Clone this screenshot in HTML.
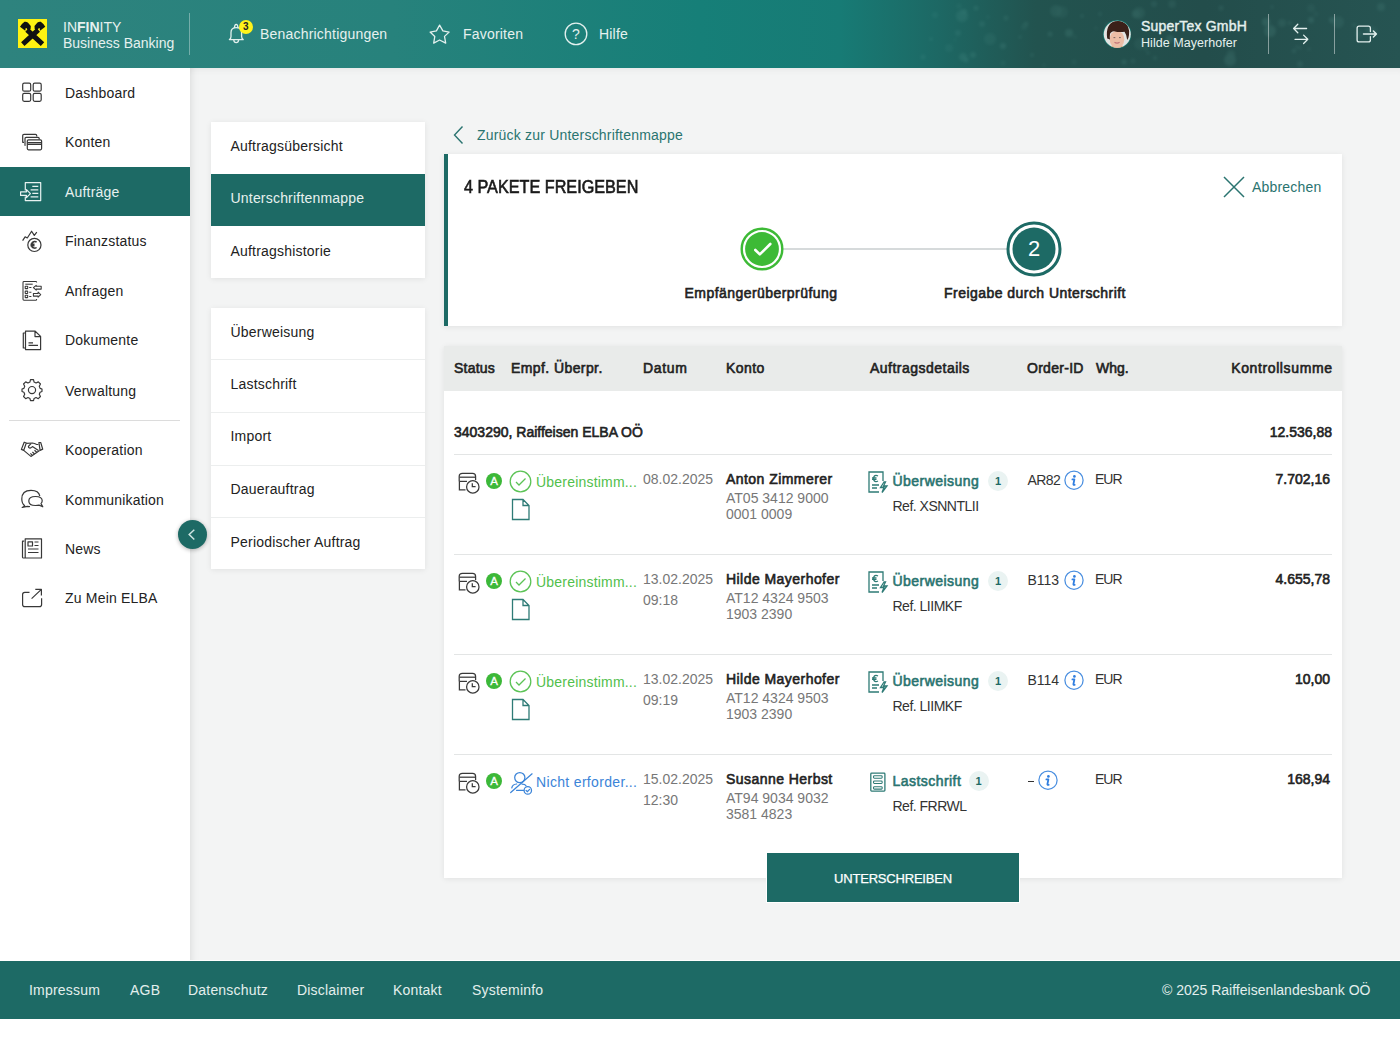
<!DOCTYPE html>
<html><head><meta charset="utf-8">
<style>
*{box-sizing:border-box;margin:0;padding:0}
html,body{width:1400px;height:1050px;overflow:hidden;background:#fff;font-family:"Liberation Sans",sans-serif;color:#222}
.abs{position:absolute}
#hdr{position:absolute;left:0;top:0;width:1400px;height:68px;background:linear-gradient(90deg,#2e837e 0%,#27827c 28%,#167f78 50%,#177b75 60%,#1d6864 67%,#22534f 74%,#234d4b 86%,#265452 100%);color:#e6f1ef}
#side{position:absolute;left:0;top:68px;width:190px;height:892px;background:#fff}
#main{position:absolute;left:190px;top:68px;width:1210px;height:892px;background:#f3f4f4;box-shadow:inset 10px 0 10px -10px rgba(0,0,0,.13), inset 0 8px 8px -8px rgba(0,0,0,.08)}
#foot{position:absolute;left:0;top:960.5px;width:1400px;height:58px;background:#1d6a65;color:#e3efed;font-size:14px}
.t14{font-size:14px;line-height:16px;white-space:nowrap}
.b{-webkit-text-stroke-width:0.6px;letter-spacing:0.45px}
.b0{letter-spacing:0}
.ls{letter-spacing:0.2px}
.nav{position:absolute;left:0;width:190px;height:49px;font-size:14px;color:#222}
.nav span{position:absolute;left:65px;top:16px}
.nav svg{position:absolute;left:20px;top:13px}
.nav.act{background:#1d6a65;color:#fff}
.card{position:absolute;background:#fff;box-shadow:0 1px 6px rgba(0,0,0,.08)}
.sub{position:absolute;left:0;width:214px;font-size:14px;color:#222}
.sub span{position:absolute;left:19px}
</style></head><body>
<div id="hdr">
  <svg class="abs" style="left:0;top:0" width="1400" height="68"><defs><filter id="bl" x="-50%" y="-50%" width="200%" height="200%"><feGaussianBlur stdDeviation="1.6"/></filter></defs><g fill="#7fc6bc" opacity="0.13" filter="url(#bl)"><circle cx="1062" cy="12" r="6" opacity="0.43"/><circle cx="1311" cy="8" r="4" opacity="0.43"/><circle cx="1154" cy="4" r="3" opacity="0.65"/><circle cx="1020" cy="37" r="1.5" opacity="0.90"/><circle cx="962" cy="16" r="6" opacity="0.75"/><circle cx="931" cy="39" r="1.5" opacity="0.99"/><circle cx="923" cy="57" r="2.5" opacity="0.65"/><circle cx="1170" cy="39" r="4" opacity="0.89"/><circle cx="990" cy="39" r="6" opacity="0.51"/><circle cx="949" cy="48" r="4" opacity="0.44"/><circle cx="1003" cy="46" r="3" opacity="0.87"/><circle cx="1133" cy="61" r="2.5" opacity="0.58"/><circle cx="1297" cy="47" r="2" opacity="0.45"/><circle cx="1050" cy="34" r="2.5" opacity="0.84"/><circle cx="1044" cy="65" r="1.5" opacity="0.71"/><circle cx="982" cy="24" r="3" opacity="0.65"/><circle cx="1381" cy="7" r="4" opacity="0.74"/><circle cx="1338" cy="22" r="6" opacity="0.61"/><circle cx="1148" cy="53" r="1.5" opacity="0.90"/><circle cx="1372" cy="32" r="6" opacity="0.44"/><circle cx="1266" cy="22" r="4" opacity="1.00"/><circle cx="1311" cy="20" r="3" opacity="0.93"/><circle cx="1074" cy="62" r="2.5" opacity="0.50"/><circle cx="959" cy="6" r="2.5" opacity="0.48"/><circle cx="1024" cy="27" r="3" opacity="0.45"/><circle cx="1125" cy="37" r="2" opacity="0.89"/><circle cx="1332" cy="20" r="3" opacity="0.99"/><circle cx="1241" cy="26" r="2" opacity="0.49"/><circle cx="988" cy="17" r="2" opacity="0.41"/><circle cx="1316" cy="14" r="2.5" opacity="0.40"/><circle cx="1109" cy="26" r="4" opacity="0.59"/><circle cx="963" cy="57" r="4" opacity="0.79"/><circle cx="1270" cy="31" r="6" opacity="0.88"/><circle cx="1096" cy="28" r="1.5" opacity="0.69"/><circle cx="1100" cy="14" r="2" opacity="0.66"/><circle cx="955" cy="40" r="1.5" opacity="0.40"/><circle cx="976" cy="8" r="2.5" opacity="0.77"/><circle cx="935" cy="15" r="3" opacity="0.49"/><circle cx="1026" cy="24" r="2.5" opacity="0.68"/><circle cx="958" cy="33" r="3" opacity="0.69"/><circle cx="1056" cy="11" r="6" opacity="0.61"/><circle cx="1032" cy="55" r="2" opacity="0.71"/><circle cx="1003" cy="63" r="2.5" opacity="0.49"/><circle cx="1172" cy="4" r="4" opacity="0.58"/><circle cx="1221" cy="8" r="2.5" opacity="0.71"/><circle cx="1354" cy="25" r="2" opacity="0.72"/><circle cx="1290" cy="23" r="2" opacity="0.77"/><circle cx="1294" cy="51" r="2" opacity="0.88"/><circle cx="1309" cy="49" r="2" opacity="0.52"/><circle cx="1146" cy="49" r="1.5" opacity="0.87"/><circle cx="1136" cy="14" r="4" opacity="0.97"/><circle cx="1124" cy="62" r="2.5" opacity="0.97"/><circle cx="1082" cy="16" r="2" opacity="0.68"/><circle cx="1069" cy="33" r="4" opacity="0.90"/><circle cx="1140" cy="44" r="6" opacity="0.45"/><circle cx="1230" cy="60" r="6" opacity="0.85"/><circle cx="1139" cy="13" r="6" opacity="0.60"/><circle cx="1300" cy="64" r="3" opacity="0.68"/><circle cx="1272" cy="7" r="2" opacity="0.50"/><circle cx="964" cy="12" r="3" opacity="0.88"/><circle cx="973" cy="55" r="3" opacity="0.79"/><circle cx="1075" cy="37" r="2" opacity="0.41"/><circle cx="1300" cy="48" r="1.5" opacity="0.72"/><circle cx="1367" cy="30" r="2" opacity="0.90"/><circle cx="1006" cy="18" r="2.5" opacity="0.70"/><circle cx="1282" cy="23" r="4" opacity="0.65"/><circle cx="966" cy="60" r="2.5" opacity="0.94"/><circle cx="1231" cy="54" r="4" opacity="0.65"/><circle cx="1359" cy="34" r="4" opacity="0.49"/><circle cx="1155" cy="58" r="2" opacity="0.77"/></g></svg>
  <!-- logo -->
  <svg class="abs" style="left:18.2px;top:19.2px" width="29.3" height="29.3" viewBox="0 0 29.3 29.3">
   <rect width="29.3" height="29.3" fill="#fff212"/>
   <path d="M4.8 25.2 L20.3 10.8 M24.5 25.2 L9 10.8" stroke="#111" stroke-width="5"/>
   <path d="M2 7.8 Q4 4.5 6.5 2.8 Q8.3 2.4 9.8 3.6 L12.8 7 L12.6 10 L10.4 11.8 L8.4 9 L7.6 9.3 L7.3 11.7 Z" fill="#111"/>
   <path d="M27.3 7.8 Q25.3 4.5 22.8 2.8 Q21 2.4 19.5 3.6 L16.5 7 L16.7 10 L18.9 11.8 L20.9 9 L21.7 9.3 L22 11.7 Z" fill="#111"/>
  </svg>
  <svg class="abs" style="left:0;top:0" width="1400" height="68" viewBox="0 0 1400 68" fill="none" stroke="#e3f0ee" stroke-width="1.3" stroke-linejoin="round" stroke-linecap="round">
   <!-- bell -->
   <path d="M229.4 39.6 Q231 38.5 231 36.5 V32.5 Q231 27.6 236.2 27.6 Q241.6 27.6 241.6 32.5 V36.5 Q241.6 38.5 243.2 39.6 Z"/>
   <path d="M234.5 27.6 Q234.6 24.4 236.2 24.4 Q237.8 24.4 237.9 27.6"/>
   <path d="M233.8 40 Q234 42.6 236.2 42.6 Q238.4 42.6 238.6 40"/>
   <!-- star -->
   <path d="M439.6 25.1 L442.9 30.9 L449.1 32.1 L444.5 36.4 L445.7 43.1 L439.6 40 L433.7 43.1 L434.8 36.4 L430.1 32.1 L436.4 30.9 Z"/>
   <!-- help -->
   <circle cx="576" cy="33.9" r="10.8"/>
   <!-- swap -->
   <path d="M1293.6 28.5 H1306.6 M1297.8 24.3 L1293.6 28.5 L1297.8 32.7"/>
   <path d="M1295 39.3 H1307.8 M1303.6 35.1 L1307.8 39.3 L1303.6 43.5"/>
   <!-- logout -->
   <path d="M1370.4 31.5 V28.2 Q1370.4 26.2 1368.4 26.2 H1359.1 Q1357.1 26.2 1357.1 28.2 V39.9 Q1357.1 41.9 1359.1 41.9 H1368.4 Q1370.4 41.9 1370.4 39.9 V36.6"/>
   <path d="M1363.5 34 H1376.3 M1373.4 31 L1376.4 34 L1373.4 37" stroke-width="1.5"/>
  </svg>
  <div class="abs" style="left:238.7px;top:19.6px;width:14.2px;height:14.2px;border-radius:50%;background:#fff31a;color:#222;font-size:10px;line-height:14.2px;text-align:center;font-weight:bold">3</div>
  <span class="abs" style="left:570px;top:25.5px;width:12px;text-align:center;font-size:14px;line-height:16px;color:#e3f0ee">?</span>
  <!-- avatar -->
  <svg class="abs" style="left:1102.5px;top:19.5px" width="28.5" height="28.5" viewBox="0 0 28.5 28.5">
   <defs><clipPath id="av"><circle cx="14.25" cy="14.25" r="13.5"/></clipPath></defs>
   <circle cx="14.25" cy="14.25" r="14.2" fill="#1a7a72"/>
   <g clip-path="url(#av)">
    <rect width="28.5" height="28.5" fill="#e2e4e2"/>
    <ellipse cx="14.5" cy="31" rx="11" ry="6" fill="#e0a884"/>
    <ellipse cx="14" cy="19.3" rx="7.3" ry="8.6" fill="#ecbda6"/>
    <path d="M4.2 18.5 Q2.2 4 12 1.3 Q17 0.4 21 2.4 Q27.2 6 26 15 Q25.6 18.5 24.2 20 Q23.6 14.5 21.5 11.8 Q16 12.6 11 11.2 Q7.6 11.6 7 14 Q6.6 16.5 7 19.5 Z" fill="#3b2119"/>
    <path d="M10.5 17.6 H12.3 M16 17.6 H17.8" stroke="#6a5a58" stroke-width="0.9"/>
    <path d="M11.5 22.3 Q14 23.9 16.6 22.3" stroke="#c4757a" stroke-width="1.2" fill="none"/>
   </g>
  </svg>
  <div class="abs" style="left:63px;top:18.8px;font-size:14px;line-height:16px">IN<b>FIN</b>ITY<br>Business Banking</div>
  <div class="abs" style="left:189px;top:13px;width:1px;height:42px;background:rgba(255,255,255,.35)"></div>
  <div class="abs" style="left:260px;top:26px;font-size:14px;letter-spacing:0.2px">Benachrichtigungen</div>
  <div class="abs" style="left:463px;top:26px;font-size:14px;letter-spacing:0.2px">Favoriten</div>
  <div class="abs" style="left:599px;top:26px;font-size:14px;letter-spacing:0.2px">Hilfe</div>
  <div class="abs" style="left:1141px;top:18px;font-size:14px;-webkit-text-stroke-width:0.4px;letter-spacing:0.19px">SuperTex GmbH</div>
  <div class="abs" style="left:1141px;top:35.7px;font-size:12.5px;letter-spacing:0.05px">Hilde Mayerhofer</div>
  <div class="abs" style="left:1268px;top:14px;width:1px;height:40px;background:rgba(255,255,255,.45)"></div>
  <div class="abs" style="left:1334px;top:14px;width:1px;height:40px;background:rgba(255,255,255,.45)"></div>
</div>
<div id="main"></div>
<!-- sub nav -->
<div class="card" style="left:211px;top:122px;width:214px;height:156px">
  <span class="abs t14 ls" style="left:19.5px;top:16.15px">Auftragsübersicht</span>
  <div class="abs" style="left:0;top:52px;width:214px;height:52px;background:#1d6a65"></div>
  <span class="abs t14 ls" style="left:19.5px;top:68.15px;color:#e8f1ef">Unterschriftenmappe</span>
  <span class="abs t14 ls" style="left:19.5px;top:120.75px">Auftragshistorie</span>
</div>
<div class="card" style="left:211px;top:307.5px;width:214px;height:261.5px">
  <span class="abs t14 ls" style="left:19.5px;top:16.45px">Überweisung</span>
  <div class="abs" style="left:0;top:51.7px;width:214px;height:1px;background:#eceeee"></div>
  <span class="abs t14 ls" style="left:19.5px;top:68.95px">Lastschrift</span>
  <div class="abs" style="left:0;top:104.5px;width:214px;height:1px;background:#eceeee"></div>
  <span class="abs t14 ls" style="left:19.5px;top:120.95px">Import</span>
  <div class="abs" style="left:0;top:157px;width:214px;height:1px;background:#eceeee"></div>
  <span class="abs t14 ls" style="left:19.5px;top:173.75px">Dauerauftrag</span>
  <div class="abs" style="left:0;top:209.8px;width:214px;height:1px;background:#eceeee"></div>
  <span class="abs t14 ls" style="left:19.5px;top:226.35px">Periodischer Auftrag</span>
</div>
<!-- back link -->
<svg class="abs" style="left:450px;top:124px" width="16" height="22" viewBox="0 0 16 22"><path d="M12.5 2.5 L4.5 11 L12.5 19.5" fill="none" stroke="#2a7470" stroke-width="1.4"/></svg>
<span class="abs t14 ls" style="left:477px;top:127.4px;color:#2a7470">Zurück zur Unterschriftenmappe</span>
<!-- step card -->
<div class="card" style="left:444px;top:154px;width:898px;height:172px;border-left:4px solid #1d6a65">
  <span class="abs" style="left:16px;top:22.5px;font-size:18px;line-height:21px;white-space:nowrap;-webkit-text-stroke:0.6px #1a1a1a;color:#1a1a1a;transform:scaleX(0.9);transform-origin:0 0">4 PAKETE FREIGEBEN</span>
  <svg class="abs" style="left:775px;top:22px" width="22" height="22" viewBox="0 0 22 22"><path d="M1 1 L21 21 M21 1 L1 21" stroke="#2a7470" stroke-width="1.5"/></svg>
  <span class="abs t14 ls" style="left:804px;top:24.9px;color:#2a7470">Abbrechen</span>
  <div class="abs" style="left:335px;top:94px;width:224px;height:2px;background:#d6dadb"></div>
  <svg class="abs" style="left:290.5px;top:72px" width="46" height="46" viewBox="0 0 46 46"><circle cx="23" cy="23" r="20.3" fill="none" stroke="#3dba36" stroke-width="2.4"/><circle cx="23" cy="23" r="16.9" fill="#3dba36"/><path d="M16.3 24 L20.8 28.4 L31.3 18" fill="none" stroke="#fff" stroke-width="2.6" stroke-linecap="round" stroke-linejoin="round"/></svg>
  <svg class="abs" style="left:557px;top:66px" width="58" height="58" viewBox="0 0 58 58"><circle cx="29" cy="29" r="26" fill="none" stroke="#1d6a65" stroke-width="3"/><circle cx="29" cy="29" r="21.5" fill="#1d6a65"/></svg>
  <span class="abs" style="left:557px;top:82px;width:58px;text-align:center;font-size:22px;line-height:26px;color:#fff">2</span>
  <span class="abs t14 b" style="left:213px;top:131px;width:200px;text-align:center;color:#222">Empfängerüberprüfung</span>
  <span class="abs t14 b" style="left:487px;top:131px;width:200px;text-align:center;color:#222">Freigabe durch Unterschrift</span>
</div>
<!-- table card -->
<div class="card" style="left:444px;top:345.5px;width:898px;height:532.5px">
  <div class="abs" style="left:0;top:0;width:898px;height:45px;background:#e9ebea"></div>
  <span class="abs t14 b" style="left:10px;top:14.5px;letter-spacing:0.22px">Status</span>
  <span class="abs t14 b" style="left:67px;top:14.5px;letter-spacing:0.41px">Empf. Überpr.</span>
  <span class="abs t14 b" style="left:199px;top:14.5px;letter-spacing:0.64px">Datum</span>
  <span class="abs t14 b" style="left:282px;top:14.5px;letter-spacing:0.44px">Konto</span>
  <span class="abs t14 b" style="left:426px;top:14.5px;letter-spacing:0.48px">Auftragsdetails</span>
  <span class="abs t14 b" style="left:583px;top:14.5px;letter-spacing:0.28px">Order-ID</span>
  <span class="abs t14 b" style="left:652px;top:14.5px;letter-spacing:0px">Whg.</span>
  <span class="abs t14 b" style="right:9.4px;top:14.5px;letter-spacing:0.62px">Kontrollsumme</span>
  <span class="abs t14 b b0" style="left:10px;top:78.6px">3403290, Raiffeisen ELBA OÖ</span>
  <span class="abs t14 b b0" style="right:10px;top:78.6px">12.536,88</span>
<div class="abs" style="left:10px;top:108.0px;width:878px;height:1px;background:#e3e5e5"></div>
<svg class="abs" style="left:14px;top:125.0px" width="24" height="24" viewBox="0 0 24 24" fill="none" stroke="#3a3a3a" stroke-width="1.25"><path d="M1.2 10.4 V5.5 Q1.2 2.4 4.5 2.4 H14.5 Q17.6 2.4 17.6 5.5 V9"/><path d="M1.5 6.2 H17.3"/><path d="M1.2 10.4 H9"/><path d="M1.4 10.4 V18.8 H7.5"/><circle cx="14.8" cy="15.9" r="6.2" fill="#fff"/><path d="M14.3 12.3 V15.5 H17.6"/></svg>
<div class="abs" style="left:42px;top:127.0px;width:16px;height:16px;border-radius:50%;background:#3cb838;color:#fff;font-size:11.5px;line-height:16px;text-align:center;-webkit-text-stroke:0.3px #fff">A</div>
<svg class="abs" style="left:64.5px;top:124.5px" width="23" height="23" viewBox="0 0 23 23" fill="none" stroke="#5cc356" stroke-width="1.3"><circle cx="11.5" cy="11.5" r="10.3"/><path d="M7 12 L10 15 L16.5 8.5"/></svg>
<span class="abs t14" style="left:92px;top:128.55px;color:#52c04c;letter-spacing:0.2px">Übereinstimm...</span>
<svg class="abs" style="left:67px;top:152.0px" width="20" height="23" viewBox="0 0 20 23" fill="none" stroke="#2e7b76" stroke-width="1.3"><path d="M1.5 1.5 H12 L18 7.5 V21.5 H1.5 Z M12 1.5 V7.5 H18"/></svg>
<span class="abs t14" style="left:199px;top:125.45px;color:#777">08.02.2025</span>
<span class="abs t14 b" style="left:282px;top:125.25px;color:#222">Anton Zimmerer</span>
<span class="abs t14" style="left:282px;top:144.65px;color:#777">AT05 3412 9000</span>
<span class="abs t14" style="left:282px;top:160.95px;color:#777">0001 0009</span>
<svg class="abs" style="left:423px;top:124.0px" width="22" height="24" viewBox="0 0 22 24" fill="none" stroke="#2e7b76" stroke-width="1.3"><path d="M16 11 V2 H2 V22 H12"/><path d="M11 6 Q8.5 4.5 7 6.5 Q5.8 8.5 7 10.5 Q8.5 12.5 11 11 M5 7.8 H9.5 M5 9.3 H9.5"/><path d="M5 15 H12 M5 18 H10"/><path d="M17 12 L13.5 17.5 H17 L15 22.5 L20 16 H16.5 L18.5 12 Z"/></svg>
<span class="abs t14 b" style="left:448.5px;top:127.65px;color:#2a7470">Überweisung</span>
<div class="abs" style="left:544px;top:125.5px;width:20px;height:20px;border-radius:50%;background:#eaf3f2;color:#1d6a65;font-size:11px;line-height:20px;text-align:center;font-weight:bold">1</div>
<span class="abs t14" style="left:448.5px;top:152.65px;color:#333;letter-spacing:-0.5px">Ref. XSNNTLII</span>
<span class="abs t14" style="left:583.5px;top:126.05px;color:#333;letter-spacing:-0.6px">AR82</span>
<svg class="abs" style="left:620px;top:124.5px" width="20" height="20" viewBox="0 0 20 20"><circle cx="10" cy="10.2" r="9.1" fill="none" stroke="#4a8fe0" stroke-width="1.25"/><circle cx="10.4" cy="6.4" r="1.35" fill="#2f7ee0"/><path d="M8.4 9.4 H10.4 L9.4 14.2 Q9.3 15.2 10.7 14.8" fill="none" stroke="#2f7ee0" stroke-width="1.8" stroke-linejoin="round" stroke-linecap="round"/></svg>
<span class="abs t14" style="left:651px;top:125.85px;color:#333;letter-spacing:-1px">EUR</span>
<span class="abs t14 b b0" style="right:12px;top:125.85px;color:#222">7.702,16</span>
<div class="abs" style="left:10px;top:208.0px;width:878px;height:1px;background:#e3e5e5"></div>
<svg class="abs" style="left:14px;top:225.0px" width="24" height="24" viewBox="0 0 24 24" fill="none" stroke="#3a3a3a" stroke-width="1.25"><path d="M1.2 10.4 V5.5 Q1.2 2.4 4.5 2.4 H14.5 Q17.6 2.4 17.6 5.5 V9"/><path d="M1.5 6.2 H17.3"/><path d="M1.2 10.4 H9"/><path d="M1.4 10.4 V18.8 H7.5"/><circle cx="14.8" cy="15.9" r="6.2" fill="#fff"/><path d="M14.3 12.3 V15.5 H17.6"/></svg>
<div class="abs" style="left:42px;top:227.0px;width:16px;height:16px;border-radius:50%;background:#3cb838;color:#fff;font-size:11.5px;line-height:16px;text-align:center;-webkit-text-stroke:0.3px #fff">A</div>
<svg class="abs" style="left:64.5px;top:224.5px" width="23" height="23" viewBox="0 0 23 23" fill="none" stroke="#5cc356" stroke-width="1.3"><circle cx="11.5" cy="11.5" r="10.3"/><path d="M7 12 L10 15 L16.5 8.5"/></svg>
<span class="abs t14" style="left:92px;top:228.55px;color:#52c04c;letter-spacing:0.2px">Übereinstimm...</span>
<svg class="abs" style="left:67px;top:252.0px" width="20" height="23" viewBox="0 0 20 23" fill="none" stroke="#2e7b76" stroke-width="1.3"><path d="M1.5 1.5 H12 L18 7.5 V21.5 H1.5 Z M12 1.5 V7.5 H18"/></svg>
<span class="abs t14" style="left:199px;top:225.45px;color:#777">13.02.2025</span>
<span class="abs t14" style="left:199px;top:246.05px;color:#777">09:18</span>
<span class="abs t14 b" style="left:282px;top:225.25px;color:#222">Hilde Mayerhofer</span>
<span class="abs t14" style="left:282px;top:244.65px;color:#777">AT12 4324 9503</span>
<span class="abs t14" style="left:282px;top:260.95px;color:#777">1903 2390</span>
<svg class="abs" style="left:423px;top:224.0px" width="22" height="24" viewBox="0 0 22 24" fill="none" stroke="#2e7b76" stroke-width="1.3"><path d="M16 11 V2 H2 V22 H12"/><path d="M11 6 Q8.5 4.5 7 6.5 Q5.8 8.5 7 10.5 Q8.5 12.5 11 11 M5 7.8 H9.5 M5 9.3 H9.5"/><path d="M5 15 H12 M5 18 H10"/><path d="M17 12 L13.5 17.5 H17 L15 22.5 L20 16 H16.5 L18.5 12 Z"/></svg>
<span class="abs t14 b" style="left:448.5px;top:227.65px;color:#2a7470">Überweisung</span>
<div class="abs" style="left:544px;top:225.5px;width:20px;height:20px;border-radius:50%;background:#eaf3f2;color:#1d6a65;font-size:11px;line-height:20px;text-align:center;font-weight:bold">1</div>
<span class="abs t14" style="left:448.5px;top:252.65px;color:#333;letter-spacing:-0.5px">Ref. LIIMKF</span>
<span class="abs t14" style="left:583.5px;top:226.05px;color:#333;">B113</span>
<svg class="abs" style="left:620px;top:224.5px" width="20" height="20" viewBox="0 0 20 20"><circle cx="10" cy="10.2" r="9.1" fill="none" stroke="#4a8fe0" stroke-width="1.25"/><circle cx="10.4" cy="6.4" r="1.35" fill="#2f7ee0"/><path d="M8.4 9.4 H10.4 L9.4 14.2 Q9.3 15.2 10.7 14.8" fill="none" stroke="#2f7ee0" stroke-width="1.8" stroke-linejoin="round" stroke-linecap="round"/></svg>
<span class="abs t14" style="left:651px;top:225.85px;color:#333;letter-spacing:-1px">EUR</span>
<span class="abs t14 b b0" style="right:12px;top:225.85px;color:#222">4.655,78</span>
<div class="abs" style="left:10px;top:308.0px;width:878px;height:1px;background:#e3e5e5"></div>
<svg class="abs" style="left:14px;top:325.0px" width="24" height="24" viewBox="0 0 24 24" fill="none" stroke="#3a3a3a" stroke-width="1.25"><path d="M1.2 10.4 V5.5 Q1.2 2.4 4.5 2.4 H14.5 Q17.6 2.4 17.6 5.5 V9"/><path d="M1.5 6.2 H17.3"/><path d="M1.2 10.4 H9"/><path d="M1.4 10.4 V18.8 H7.5"/><circle cx="14.8" cy="15.9" r="6.2" fill="#fff"/><path d="M14.3 12.3 V15.5 H17.6"/></svg>
<div class="abs" style="left:42px;top:327.0px;width:16px;height:16px;border-radius:50%;background:#3cb838;color:#fff;font-size:11.5px;line-height:16px;text-align:center;-webkit-text-stroke:0.3px #fff">A</div>
<svg class="abs" style="left:64.5px;top:324.5px" width="23" height="23" viewBox="0 0 23 23" fill="none" stroke="#5cc356" stroke-width="1.3"><circle cx="11.5" cy="11.5" r="10.3"/><path d="M7 12 L10 15 L16.5 8.5"/></svg>
<span class="abs t14" style="left:92px;top:328.55px;color:#52c04c;letter-spacing:0.2px">Übereinstimm...</span>
<svg class="abs" style="left:67px;top:352.0px" width="20" height="23" viewBox="0 0 20 23" fill="none" stroke="#2e7b76" stroke-width="1.3"><path d="M1.5 1.5 H12 L18 7.5 V21.5 H1.5 Z M12 1.5 V7.5 H18"/></svg>
<span class="abs t14" style="left:199px;top:325.45px;color:#777">13.02.2025</span>
<span class="abs t14" style="left:199px;top:346.05px;color:#777">09:19</span>
<span class="abs t14 b" style="left:282px;top:325.25px;color:#222">Hilde Mayerhofer</span>
<span class="abs t14" style="left:282px;top:344.65px;color:#777">AT12 4324 9503</span>
<span class="abs t14" style="left:282px;top:360.95px;color:#777">1903 2390</span>
<svg class="abs" style="left:423px;top:324.0px" width="22" height="24" viewBox="0 0 22 24" fill="none" stroke="#2e7b76" stroke-width="1.3"><path d="M16 11 V2 H2 V22 H12"/><path d="M11 6 Q8.5 4.5 7 6.5 Q5.8 8.5 7 10.5 Q8.5 12.5 11 11 M5 7.8 H9.5 M5 9.3 H9.5"/><path d="M5 15 H12 M5 18 H10"/><path d="M17 12 L13.5 17.5 H17 L15 22.5 L20 16 H16.5 L18.5 12 Z"/></svg>
<span class="abs t14 b" style="left:448.5px;top:327.65px;color:#2a7470">Überweisung</span>
<div class="abs" style="left:544px;top:325.5px;width:20px;height:20px;border-radius:50%;background:#eaf3f2;color:#1d6a65;font-size:11px;line-height:20px;text-align:center;font-weight:bold">1</div>
<span class="abs t14" style="left:448.5px;top:352.65px;color:#333;letter-spacing:-0.5px">Ref. LIIMKF</span>
<span class="abs t14" style="left:583.5px;top:326.05px;color:#333;">B114</span>
<svg class="abs" style="left:620px;top:324.5px" width="20" height="20" viewBox="0 0 20 20"><circle cx="10" cy="10.2" r="9.1" fill="none" stroke="#4a8fe0" stroke-width="1.25"/><circle cx="10.4" cy="6.4" r="1.35" fill="#2f7ee0"/><path d="M8.4 9.4 H10.4 L9.4 14.2 Q9.3 15.2 10.7 14.8" fill="none" stroke="#2f7ee0" stroke-width="1.8" stroke-linejoin="round" stroke-linecap="round"/></svg>
<span class="abs t14" style="left:651px;top:325.85px;color:#333;letter-spacing:-1px">EUR</span>
<span class="abs t14 b b0" style="right:12px;top:325.85px;color:#222">10,00</span>
<div class="abs" style="left:10px;top:408.0px;width:878px;height:1px;background:#e3e5e5"></div>
<svg class="abs" style="left:14px;top:425.0px" width="24" height="24" viewBox="0 0 24 24" fill="none" stroke="#3a3a3a" stroke-width="1.25"><path d="M1.2 10.4 V5.5 Q1.2 2.4 4.5 2.4 H14.5 Q17.6 2.4 17.6 5.5 V9"/><path d="M1.5 6.2 H17.3"/><path d="M1.2 10.4 H9"/><path d="M1.4 10.4 V18.8 H7.5"/><circle cx="14.8" cy="15.9" r="6.2" fill="#fff"/><path d="M14.3 12.3 V15.5 H17.6"/></svg>
<div class="abs" style="left:42px;top:427.0px;width:16px;height:16px;border-radius:50%;background:#3cb838;color:#fff;font-size:11.5px;line-height:16px;text-align:center;-webkit-text-stroke:0.3px #fff">A</div>
<svg class="abs" style="left:64.5px;top:423.5px" width="26" height="27" viewBox="0 0 26 27" fill="none" stroke="#3b84d8" stroke-width="1.25" stroke-linecap="round"><circle cx="10.8" cy="8.6" r="5.1"/><path d="M2.8 18.8 Q3.5 15.3 7.6 15 M13 15 Q16.2 15 17 16.8"/><path d="M7.6 21.4 H14.5"/><path d="M1.7 23.5 L23.1 4.8"/><circle cx="18.8" cy="21.4" r="3.7"/><path d="M17.1 21.5 L18.4 22.7 L20.6 20.3"/></svg>
<span class="abs t14" style="left:92px;top:428.55px;color:#3b84d8;letter-spacing:0.33px">Nicht erforder...</span>
<span class="abs t14" style="left:199px;top:425.45px;color:#777">15.02.2025</span>
<span class="abs t14" style="left:199px;top:446.05px;color:#777">12:30</span>
<span class="abs t14 b" style="left:282px;top:425.25px;color:#222">Susanne Herbst</span>
<span class="abs t14" style="left:282px;top:444.65px;color:#777">AT94 9034 9032</span>
<span class="abs t14" style="left:282px;top:460.95px;color:#777">3581 4823</span>
<svg class="abs" style="left:423px;top:424.5px" width="22" height="24" viewBox="0 0 22 24" fill="none" stroke="#2e7b76" stroke-width="1.3"><rect x="3.8" y="3.1" width="14.1" height="18" rx="0.8"/><g stroke-width="1.05"><rect x="6.5" y="5.8" width="8.7" height="2.4" rx="0.9"/><rect x="6.5" y="11" width="8.7" height="2.4" rx="0.9"/><rect x="6.5" y="16.7" width="8.7" height="2.4" rx="0.9"/></g></svg>
<span class="abs t14 b" style="left:448.5px;top:427.65px;color:#2a7470">Lastschrift</span>
<div class="abs" style="left:524.5px;top:425.5px;width:20px;height:20px;border-radius:50%;background:#eaf3f2;color:#1d6a65;font-size:11px;line-height:20px;text-align:center;font-weight:bold">1</div>
<span class="abs t14" style="left:448.5px;top:452.65px;color:#333;letter-spacing:-0.5px">Ref. FRRWL</span>
<div class="abs" style="left:584px;top:435.2px;width:5.5px;height:1.5px;background:#333"></div>
<svg class="abs" style="left:594px;top:424.5px" width="20" height="20" viewBox="0 0 20 20"><circle cx="10" cy="10.2" r="9.1" fill="none" stroke="#4a8fe0" stroke-width="1.25"/><circle cx="10.4" cy="6.4" r="1.35" fill="#2f7ee0"/><path d="M8.4 9.4 H10.4 L9.4 14.2 Q9.3 15.2 10.7 14.8" fill="none" stroke="#2f7ee0" stroke-width="1.8" stroke-linejoin="round" stroke-linecap="round"/></svg>
<span class="abs t14" style="left:651px;top:425.85px;color:#333;letter-spacing:-1px">EUR</span>
<span class="abs t14 b b0" style="right:12px;top:425.85px;color:#222">168,94</span>
</div>
<div class="abs" style="left:766px;top:852px;width:254px;height:51px;background:#1d6a65;border:1px solid #fff"></div>
<span class="abs" style="left:766px;top:870.5px;width:254px;text-align:center;font-size:13px;line-height:16px;color:#fff;letter-spacing:-0.2px;-webkit-text-stroke:0.25px #fff">UNTERSCHREIBEN</span>

<div id="side">
  <div class="abs" style="left:0;top:99px;width:190px;height:49px;background:#1d6a65"></div>
  <span class="abs t14 ls" style="left:65px;top:16.65px;color:#222">Dashboard</span>
  <span class="abs t14 ls" style="left:65px;top:66.15px;color:#222">Konten</span>
  <span class="abs t14 ls" style="left:65px;top:115.65px;color:#e8f1ef">Aufträge</span>
  <span class="abs t14 ls" style="left:65px;top:165.15px;color:#222">Finanzstatus</span>
  <span class="abs t14 ls" style="left:65px;top:214.75px;color:#222">Anfragen</span>
  <span class="abs t14 ls" style="left:65px;top:264.45px;color:#222">Dokumente</span>
  <span class="abs t14 ls" style="left:65px;top:314.65px;color:#222">Verwaltung</span>
  <span class="abs t14 ls" style="left:65px;top:374.15px;color:#222">Kooperation</span>
  <span class="abs t14 ls" style="left:65px;top:423.65px;color:#222">Kommunikation</span>
  <span class="abs t14 ls" style="left:65px;top:472.65px;color:#222">News</span>
  <span class="abs t14 ls" style="left:65px;top:522.15px;color:#222">Zu Mein ELBA</span>
  <div class="abs" style="left:9px;top:351.5px;width:171px;height:1px;background:#dcdcdc"></div>
</div>

<!-- sidebar icons -->
<svg class="abs" style="left:0;top:0" width="190" height="960" viewBox="0 0 190 960" fill="none" stroke="#383838" stroke-width="1.2" stroke-linejoin="round">
  <!-- dashboard -->
  <rect x="22.7" y="83.2" width="8" height="8" rx="1.5"/><rect x="33.2" y="83.2" width="8" height="8" rx="1.5"/>
  <rect x="22.7" y="93.3" width="8" height="8" rx="1.5"/><rect x="33.2" y="93.3" width="8" height="8" rx="1.5"/>
  <!-- konten -->
  <path d="M24 142.3 H22.7 V135.5 Q22.7 134.3 24 134.3 H35.5 Q36.7 134.3 36.7 135.5 V136.5"/>
  <path d="M25.5 145.3 H25 V138.5 Q25 137.3 26.2 137.3 H38 Q39.2 137.3 39.2 138.5 V139.5"/>
  <rect x="27.3" y="139.8" width="14.3" height="10" rx="1.2"/>
  <path d="M27.3 142.6 H41.6 M27.3 144.4 H41.6"/>
  <!-- aufträge (white) -->
  <g stroke="#e8f2f1">
   <path d="M25.3 190.5 V182.6 H40.7 V200.6 H25.3 V196.5"/>
   <path d="M20.6 191.8 H26.5 V189.6 L30.4 193.6 L26.5 197.6 V195.4 H20.6 Z"/>
   <path d="M32.3 186.3 H38.3 M30.6 189.9 H38.3 M32.3 193.3 H38.3 M30.6 196.9 H38.3"/>
  </g>
  <!-- finanzstatus -->
  <path d="M22.6 240.6 L25.1 236.8 L27.3 238 L31.6 231.2 L34.3 235.4 L36.8 232.2"/>
  <circle cx="34.4" cy="244.9" r="6.6"/>
  <path d="M36.6 242.2 Q35.6 241.4 34.4 241.6 Q31.6 242.2 31.6 244.9 Q31.6 247.8 34.4 248.1 Q35.6 248.3 36.6 247.5 M30.5 244.2 H34.5 M30.5 245.8 H34.5" stroke-width="1.5"/>
  <!-- anfragen -->
  <g stroke-width="1.05">
  <path d="M36.6 282.6 V282.3 Q36.6 281.5 35.8 281.5 H23.9 Q23 281.5 23 282.4 V299.3 Q23 300.2 23.9 300.2 H35.8 Q36.6 300.2 36.6 299.4 V299.1"/>
  <path d="M25.3 284.2 H32.7"/>
  <rect x="25.2" y="286.2" width="2.5" height="2.4" rx="0.4"/><rect x="25.2" y="291.1" width="2.5" height="2.4" rx="0.4"/><rect x="25.2" y="295.2" width="2.5" height="2.4" rx="0.4"/>
  <path d="M29.2 287.5 H31.4 M29.2 292.3 H31.4 M29.2 296.5 H31.4"/>
  <path d="M41.2 286.3 H36.2 V285.3 L33.4 287.7 L36.2 290.2 V289.1 H41.2 Z"/>
  <path d="M33.4 293.4 H38.1 V292 L40.7 294.6 L38.1 297.2 V296.1 H33.4 Z"/>
  </g>
  <!-- dokumente -->
  <path d="M25 333 H23.3 V348 H25"/>
  <path d="M25.5 331.2 H35.2 L40.6 336.4 V349.6 H25.5 Z M35 331.5 V336.6 H40.4"/>
  <path d="M28.5 342.8 H33 M28.5 345.3 H38"/>
  <!-- verwaltung gear -->
  <path d="M30.2 380 H33.6 L34.2 382.7 L36.4 383.8 L38.9 382.5 L41.3 384.9 L40 387.4 L40.9 389.7 L43 390.5 V393.2 L40.9 394 L40 396.3 L41.3 398.8 L38.9 401.2 L36.4 399.9 L34.2 401 L33.6 403.3 H30.2 L29.6 401 L27.4 399.9 L24.9 401.2 L22.5 398.8 L23.8 396.3 L22.9 394 L20.8 393.2 V390.5 L22.9 389.7 L23.8 387.4 L22.5 384.9 L24.9 382.5 L27.4 383.8 L29.6 382.7 Z" transform="translate(32 390.1) scale(0.9) translate(-31.9 -391.65)" stroke-width="1.3"/>
  <circle cx="32" cy="390.1" r="3.6"/>
  <!-- kooperation -->
  <path d="M21.4 449.4 L24.2 442.2 L26.3 443 L23.7 450.4 Z"/>
  <path d="M38.9 442.5 L40.7 442.5 L42.7 449.1 L40.1 450.4 Z"/>
  <path d="M26.4 443.3 Q29.5 443 32.4 443 Q34.5 443.4 36.3 444.3 L38.4 444.5"/>
  <path d="M31 443.6 L28.4 446.4 Q28.6 448.5 30.8 447.9 L32.4 446.6 L38.5 450.6"/>
  <path d="M23.7 450.4 L30.9 456.4 L39.6 450.4"/>
  <path d="M30.4 453.3 L32.4 455.3 M32.4 452 L34.6 454 M34.5 450.2 L36.7 452.2"/>
  <!-- kommunikation -->
  <path d="M25 505.8 Q21.8 503.8 21.8 498.9 Q21.8 490.3 31 490.3 Q38.8 490.3 39.8 496.2"/>
  <path d="M25 505.8 L22.2 507.4 L27.5 506.4 Q28.8 506.6 30 506.5"/>
  <path d="M35.5 496.5 Q42.2 496.5 42.2 500.8 Q42.2 502.5 41 503.6 L42.8 506.8 L39 505.1 Q37.5 505.5 35.5 505.5 Q28.8 505.5 28.8 500.9 Q28.8 496.5 35.5 496.5 Z"/>
  <!-- news -->
  <path d="M24.2 541.2 H22.5 V557.2 Q22.5 558 23.6 558 H41.5 V538.8 H25.2 V557.5"/>
  <rect x="28" y="541.8" width="4.5" height="4.2"/>
  <path d="M34.5 542 H38.5 M34.5 545.5 H38.5 M28 549 H38.5 M28 552.5 H38.5"/>
  <!-- zu mein elba -->
  <path d="M29.5 592.3 H24.8 Q22.6 592.3 22.6 594.5 V604.4 Q22.6 606.6 24.8 606.6 H39.4 Q41.6 606.6 41.6 604.4 V598.3"/>
  <path d="M31.6 598.6 L41.4 589.4 M35.3 589.4 H41.4 V595.5"/>
</svg>
<!-- collapse button -->
<div class="abs" style="left:178px;top:519.5px;width:29px;height:29px;border-radius:50%;background:#1d6a65;box-shadow:0 1px 4px rgba(0,0,0,.3)"></div>
<svg class="abs" style="left:178px;top:519.5px" width="29" height="29" viewBox="0 0 29 29"><path d="M16.3 9.8 L11.2 14.5 L16.3 19.5" fill="none" stroke="#cfe5e2" stroke-width="1.5"/></svg>
<div id="foot" style="letter-spacing:0.2px">
  <span class="abs" style="left:29px;top:21px">Impressum</span>
  <span class="abs" style="left:130px;top:21px">AGB</span>
  <span class="abs" style="left:188px;top:21px">Datenschutz</span>
  <span class="abs" style="left:297px;top:21px">Disclaimer</span>
  <span class="abs" style="left:393px;top:21px">Kontakt</span>
  <span class="abs" style="left:472px;top:21px">Systeminfo</span>
  <span class="abs" style="right:29.5px;top:21px;letter-spacing:0">© 2025 Raiffeisenlandesbank OÖ</span>
</div>
</body></html>
